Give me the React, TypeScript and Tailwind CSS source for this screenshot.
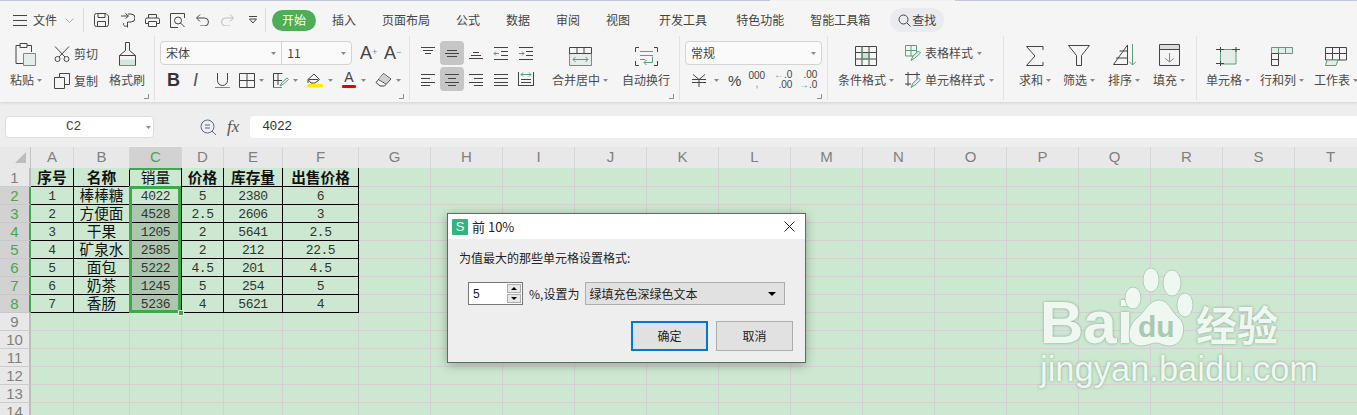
import type { ReactNode } from 'react';

const CJK = 'font-["Noto_Sans_CJK_SC","Liberation_Sans",sans-serif]';
const GREEN = '#5a9e78';
const INK = '#444';

const tabs = [
    { label: '插入', ml: 16 },
    { label: '页面布局', ml: 26 },
    { label: '公式', ml: 26 },
    { label: '数据', ml: 26 },
    { label: '审阅', ml: 26 },
    { label: '视图', ml: 26 },
    { label: '开发工具', ml: 29 },
    { label: '特色功能', ml: 29 },
    { label: '智能工具箱', ml: 26 },
];

const columns = [
    { name: 'A', width: 43 },
    { name: 'B', width: 56 },
    { name: 'C', width: 52 },
    { name: 'D', width: 42 },
    { name: 'E', width: 59 },
    { name: 'F', width: 76 },
];
const emptyColumns = ['G', 'H', 'I', 'J', 'K', 'L', 'M', 'N', 'O', 'P', 'Q', 'R', 'S', 'T'];

const sheet = [
    ['序号', '名称', '销量', '价格', '库存量', '出售价格'],
    ['1', '棒棒糖', '4022', '5', '2380', '6'],
    ['2', '方便面', '4528', '2.5', '2606', '3'],
    ['3', '干果', '1205', '2', '5641', '2.5'],
    ['4', '矿泉水', '2585', '2', '212', '22.5'],
    ['5', '面包', '5222', '4.5', '201', '4.5'],
    ['6', '奶茶', '1245', '5', '254', '5'],
    ['7', '香肠', '5236', '4', '5621', '4'],
];

function Ico({ w, h, children, className = '' }: { w: number; h: number; children: ReactNode; className?: string }) {
    return (
        <svg width={w} height={h} viewBox={`0 0 ${w} ${h}`} fill="none" stroke={INK} strokeWidth={1} className={`block shrink-0 ${className}`}>
            {children}
        </svg>
    );
}

function Caret({ className = '' }: { className?: string }) {
    return (
        <svg width={5} height={3} viewBox="0 0 5 3" className={`block shrink-0 ${className}`}>
            <path d="M0 0h5L2.5 3z" fill="#8c8c8c" />
        </svg>
    );
}

function Launcher({ right }: { right: number }) {
    return (
        <svg width={5} height={5} viewBox="0 0 5 5" className="absolute top-[58px]" style={{ right }}>
            <path d="M4.5 0V4.5H0" fill="none" stroke="#8c8c8c" />
        </svg>
    );
}

// horizontal rules used by the alignment buttons: [x1, x2, y]
function Lines({ rows, children }: { rows: number[][]; children?: ReactNode }) {
    return (
        <Ico w={16} h={16}>
            {rows.map(([a, b, y], i) => (
                <path key={i} d={`M${a} ${y + 0.5}H${b}`} />
            ))}
            {children}
        </Ico>
    );
}

function BigButton({ icon, label, width, ml, caret = true }: { icon: ReactNode; label: string; width: number; ml: number; caret?: boolean }) {
    return (
        <div className="flex flex-col items-center" style={{ width, marginLeft: ml }}>
            <div className="flex h-[30px] items-end">{icon}</div>
            <div className="flex h-[28px] items-center gap-[3px] whitespace-nowrap text-[12px] text-[#4a4a4a]">
                {label}
                {caret && <Caret />}
            </div>
        </div>
    );
}

function Group({ width, children }: { width: number; children: ReactNode }) {
    return (
        <div className="relative h-[64px] shrink-0 border-r border-[#e2e2e2]" style={{ width }}>
            {children}
        </div>
    );
}

function Combo({ text, width }: { text: string; width: number }) {
    return (
        <div className="flex h-full items-center px-[5px] text-[12px] text-[#444]" style={{ width }}>
            <span className="flex-1">{text}</span>
            <Caret />
        </div>
    );
}

function QuickBar() {
    return (
        <div className="flex h-[35px] items-center pt-[3px]">
            <Ico w={14} h={11} className="ml-[13px]">
                <path d="M0 .5H14M0 5.5H14M0 10.5H14" />
            </Ico>
            <span className="ml-[6px] text-[12px] text-[#444]">文件</span>
            <Ico w={9} h={5} className="ml-[8px]">
                <path d="M.5.5L4.5 4.5L8.5.5" stroke="#aaa" />
            </Ico>
            <div className="ml-[9px] h-[24px] w-px bg-[#dcdcdc]" />
            <Ico w={15} h={14} className="ml-[10px]">
                <path d="M2.5.5H12L14.5 3V11.5a2 2 0 0 1-2 2H2.5a2 2 0 0 1-2-2V2.5a2 2 0 0 1 2-2zM3.5 13.5V8.5H11.5V13.5M4 .5V4.5H11V.5" />
            </Ico>
            <Ico w={15} h={15} className="ml-[11px]">
                <path d="M5.5 .5L8.5 3L5.5 5.5M8 3H1M8 1H11a3.5 3.5 0 0 1 0 8H7.5V14.5M7.5 11.5a2 2 0 1 1-3.5-1.5" />
            </Ico>
            <Ico w={15} h={13} className="ml-[10px]">
                <path d="M3.5 4V.5H11.5V4M3 9.5H.5V5.5a1.5 1.5 0 0 1 1.5-1.5H13a1.5 1.5 0 0 1 1.5 1.5V9.5H12M3.5 7.5H11.5V12.5H3.5z" />
            </Ico>
            <Ico w={16} h={15} className="ml-[10px]">
                <path d="M14.5 5V.5H.5V14.5H8" />
                <circle cx="8" cy="7.5" r="3.5" />
                <path d="M10.5 10L14.5 14" />
            </Ico>
            <Ico w={13} h={12} className="ml-[10px]">
                <path d="M4 .5L.5 4L4 7.5M1 4H8.5a4 4 0 0 1 0 8H4" />
            </Ico>
            <Ico w={13} h={12} className="ml-[12px]">
                <path d="M9 .5L12.5 4L9 7.5M12 4H4.5a4 4 0 0 0 0 8H9" stroke="#bbb" />
            </Ico>
            <Ico w={8} h={8} className="ml-[15px]">
                <path d="M0 .5H8" />
                <path d="M.5 3L4 7L7.5 3z" />
            </Ico>
            <div className="ml-[8px] h-[24px] w-px bg-[#dcdcdc]" />
            <div className="ml-[6px] flex h-[21px] w-[44px] items-center justify-center rounded-full bg-[#4fad57] text-[12px] text-white">开始</div>
            {tabs.map((t) => (
                <span key={t.label} className="whitespace-nowrap text-[12px] text-[#444]" style={{ marginLeft: t.ml }}>
                    {t.label}
                </span>
            ))}
            <div className="ml-[20px] flex h-[24px] w-[54px] items-center justify-center gap-[1px] rounded-full bg-[#e9ebee] text-[12px] text-[#444]">
                <Ico w={13} h={13}>
                    <circle cx="5.5" cy="5.5" r="4.5" />
                    <path d="M9 9L12.5 12.5" />
                </Ico>
                查找
            </div>
        </div>
    );
}

function ClipboardGroup() {
    return (
        <Group width={155}>
            <div className="flex">
                <BigButton
                    label="粘贴"
                    width={34}
                    ml={9}
                    icon={
                        <Ico w={22} h={23}>
                            <path d="M5.5 2.5H1V20.5H8M5 .5H12V4.5H5zM12 2.5H16.5V9" />
                            <path d="M8.5 10.5H20.5V22.5H8.5z" fill="#e4ede8" stroke={GREEN} />
                        </Ico>
                    }
                />
                <div className="ml-[11px] flex w-[52px] flex-col">
                    <div className="mt-[6px] flex h-[24px] items-center gap-[4px] text-[12px] text-[#4a4a4a]">
                        <Ico w={16} h={16}>
                            <path d="M1 .5L11 11M15 .5L5 11" />
                            <circle cx="3.5" cy="13" r="2.5" />
                            <circle cx="12.5" cy="13" r="2.5" />
                        </Ico>
                        剪切
                    </div>
                    <div className="mt-[3px] flex h-[24px] items-center gap-[4px] text-[12px] text-[#4a4a4a]">
                        <Ico w={16} h={16}>
                            <path d="M5.5 4.5V.5H15.5V11.5H11M.5 4.5H10.5V15.5H.5z" />
                        </Ico>
                        复制
                    </div>
                </div>
                <BigButton
                    label="格式刷"
                    width={38}
                    ml={2}
                    caret={false}
                    icon={
                        <Ico w={19} h={24}>
                            <path d="M7.5.5H11.5V8.5L17.5 13.5V23.5H1.5V13.5L7.5 8.5z" />
                            <path d="M2 17.5H17V23H2z" fill="#d5e6dc" stroke="none" />
                            <path d="M1.5 13.5H17.5" />
                            <path d="M1.5 23.5H17.5" stroke={GREEN} />
                        </Ico>
                    }
                />
            </div>
            <Launcher right={5} />
        </Group>
    );
}

function FontGroup() {
    return (
        <Group width={255}>
            <div className="mt-[5px] flex h-[24px] items-center">
                <div className="ml-[5px] flex h-[24px] w-[192px] rounded-[4px] border border-[#d4d4d4] bg-[#fafafa]">
                    <Combo text="宋体" width={121} />
                    <div className="h-full w-px bg-[#d4d4d4]" />
                    <Combo text="11" width={69} />
                </div>
                <span className="ml-[8px] w-[24px] font-['Liberation_Sans'] text-[18px] font-light leading-none text-[#444]">
                    A<sup className="text-[9px] text-[#5a9e78]">+</sup>
                </span>
                <span className="w-[20px] font-['Liberation_Sans'] text-[18px] font-light leading-none text-[#444]">
                    A<sup className="text-[9px] text-[#5a9e78]">−</sup>
                </span>
            </div>
            <div className="mt-[3px] flex h-[24px] items-center">
                <span className="ml-[12px] w-[12px] font-['Liberation_Sans'] text-[18px] font-bold leading-none text-[#333]">B</span>
                <span className="ml-[14px] w-[10px] font-['Liberation_Sans'] text-[18px] italic leading-none text-[#555]">I</span>
                <Ico w={15} h={15} className="ml-[12px]">
                    <path d="M2.5 0V7.5a5 5 0 0 0 10 0V0" />
                    <path d="M0 14.5H15" stroke={GREEN} />
                </Ico>
                <Ico w={16} h={15} className="ml-[9px]">
                    <path d="M.5.5H15.5V14.5H.5zM8 .5V14.5M.5 7.5H15.5" />
                </Ico>
                <Caret className="ml-[4px]" />
                <Ico w={16} h={15} className="ml-[9px]">
                    <path d="M9.5.5H.5V14.5H6M.5 7.5H9M5 .5V12" />
                    <path d="M7 13L9 9.5L14 5L15.5 6.5L10.5 11zM.5 14.5H9" stroke={GREEN} />
                </Ico>
                <Caret className="ml-[4px]" />
                <Ico w={16} h={15} className="ml-[9px]">
                    <path d="M1 6.5L7 1L12.5 6.5L8 10H4zM1 6.5V10M2 6.5H11" />
                    <path d="M0 12.5a1.5 1.5 0 0 1 1.5-1.5H14.5a1.5 1.5 0 0 1 0 3.5H1.5A1.5 1.5 0 0 1 0 12.5z" fill="#ffeb00" stroke="none" />
                </Ico>
                <Caret className="ml-[5px]" />
                <div className="ml-[9px] flex w-[14px] flex-col items-center">
                    <span className="font-['Liberation_Sans'] text-[14px] leading-[11px] text-[#444]">A</span>
                    <div className="mt-[2px] h-[3px] w-[14px] rounded-[1px] bg-[#ee0000]" />
                </div>
                <Caret className="ml-[5px]" />
                <Ico w={17} h={14} className="ml-[9px]">
                    <path d="M8.5.5L16 6L9.5 13H5L1 9.5zM3.5 6.5L11 11" />
                    <path d="M8.5 1L15.5 6L11 10.5L4 6z" fill="#d0d0d0" stroke="none" />
                </Ico>
                <Caret className="ml-[4px]" />
            </div>
            <Launcher right={5} />
        </Group>
    );
}

function AlignCell({ active, children, ml }: { active?: boolean; children: ReactNode; ml: number }) {
    return (
        <div className={`flex h-[24px] w-[24px] items-center justify-center rounded-[4px] ${active ? 'bg-[#c6c6c6]' : ''}`} style={{ marginLeft: ml }}>
            {children}
        </div>
    );
}

function AlignGroup() {
    return (
        <Group width={270}>
            <div className="flex">
                <div className="flex w-[132px] flex-col">
                    <div className="mt-[5px] flex h-[24px]">
                        <AlignCell ml={6}><Lines rows={[[1, 15, 2], [3, 13, 5], [5, 11, 8]]} /></AlignCell>
                        <AlignCell ml={0} active><Lines rows={[[3, 13, 5], [1, 15, 8], [3, 13, 11]]} /></AlignCell>
                        <AlignCell ml={0}><Lines rows={[[5, 11, 7], [3, 13, 10], [1, 15, 13]]} /></AlignCell>
                        <AlignCell ml={1}>
                            <Lines rows={[[1, 15, 2], [8, 15, 6], [8, 15, 10], [1, 15, 14]]}>
                                <path d="M6 8.5H1M3 6.5L1 8.5L3 10.5" stroke={GREEN} />
                            </Lines>
                        </AlignCell>
                        <AlignCell ml={1}>
                            <Lines rows={[[1, 15, 2], [8, 15, 6], [8, 15, 10], [1, 15, 14]]}>
                                <path d="M1 8.5H6M4 6.5L6 8.5L4 10.5" stroke={GREEN} />
                            </Lines>
                        </AlignCell>
                    </div>
                    <div className="mt-[2px] flex h-[24px]">
                        <AlignCell ml={6}><Lines rows={[[1, 15, 3], [1, 10, 7], [1, 15, 11], [1, 10, 14]]} /></AlignCell>
                        <AlignCell ml={0} active><Lines rows={[[1, 15, 3], [4, 12, 7], [1, 15, 11], [4, 12, 14]]} /></AlignCell>
                        <AlignCell ml={0}><Lines rows={[[1, 15, 3], [6, 15, 7], [1, 15, 11], [6, 15, 14]]} /></AlignCell>
                        <AlignCell ml={1}><Lines rows={[[1, 15, 3], [1, 15, 7], [1, 15, 11], [1, 15, 14]]} /></AlignCell>
                        <AlignCell ml={1}>
                            <Lines rows={[[3, 13, 8], [3, 13, 11], [0, 16, 14]]}>
                                <path d="M.5 1V15M15.5 1V15" />
                                <path d="M3 3.5H13M5 1.5L3 3.5L5 5.5M11 1.5L13 3.5L11 5.5" stroke={GREEN} />
                            </Lines>
                        </AlignCell>
                    </div>
                </div>
                <BigButton
                    label="合并居中"
                    width={60}
                    ml={8}
                    icon={
                        <Ico w={23} h={19}>
                            <path d="M.5 6.5H22.5V18.5H.5z" fill="#e4ede8" stroke={GREEN} />
                            <path d="M.5.5H22.5V6.5H.5zM8 .5V6.5M15 .5V6.5" />
                            <path d="M4 12.5H19M6.5 10L4 12.5L6.5 15M16.5 10L19 12.5L16.5 15" stroke={GREEN} />
                        </Ico>
                    }
                />
                <BigButton
                    label="自动换行"
                    width={48}
                    ml={12}
                    caret={false}
                    icon={
                        <Ico w={23} h={19}>
                            <path d="M.5 5V.5H4M19 .5H22.5V5M.5 14V18.5H4M19 18.5H22.5V14" />
                            <path d="M5 4.5H18M5 8.5H18M5 12.5H10" stroke="#888" />
                            <path d="M17.5 9.5V15.5H9M11.5 13L9 15.5L11.5 18" stroke={GREEN} />
                        </Ico>
                    }
                />
            </div>
            <Launcher right={5} />
        </Group>
    );
}

function NumberGroup() {
    return (
        <Group width={148}>
            <div className="ml-[5px] mt-[5px] h-[24px] w-[137px] rounded-[4px] border border-[#d4d4d4] bg-[#fafafa]">
                <Combo text="常规" width={135} />
            </div>
            <div className="mt-[3px] flex h-[24px] items-center font-['Liberation_Sans'] text-[#444]">
                <Ico w={14} h={13} className="ml-[12px]">
                    <path d="M1 .5L7 5.5L13 .5M0 5.5H14M0 8.5H14M7 5.5V13" />
                </Ico>
                <Caret className="ml-[8px]" />
                <span className="ml-[9px] text-[15px] leading-none">%</span>
                <div className="ml-[8px] flex w-[15px] flex-col items-center text-[10px] leading-[8px]">
                    <span>000</span>
                    <span className="text-[#5a9e78]">,</span>
                </div>
                <div className="ml-[12px] flex w-[16px] flex-col items-end text-[10px] leading-[10px]">
                    <span><span className="text-[#5a9e78]">←</span>.0</span>
                    <span>.00</span>
                </div>
                <div className="ml-[9px] flex w-[16px] flex-col items-end text-[10px] leading-[10px]">
                    <span>.00</span>
                    <span><span className="text-[#5a9e78]">→</span>.0</span>
                </div>
            </div>
            <Launcher right={5} />
        </Group>
    );
}

function StyleGroup() {
    return (
        <Group width={176}>
            <div className="flex">
                <BigButton
                    label="条件格式"
                    width={60}
                    ml={8}
                    icon={
                        <Ico w={22} h={20}>
                            <path d="M7 6.5H14V13H7z" fill="#cfe3d6" stroke="none" />
                            <path d="M.5.5H21.5V19.5H.5zM.5 6.5H21.5M.5 13H21.5M7 .5V19.5M14 .5V19.5" />
                            <path d="M7 .5V13H14V6.5" stroke={GREEN} />
                        </Ico>
                    }
                />
                <div className="ml-[9px] flex flex-col">
                    <div className="mt-[5px] flex h-[24px] items-center whitespace-nowrap text-[12px] text-[#4a4a4a]">
                        <Ico w={16} h={16}>
                            <path d="M.5.5H11.5V11H.5zM.5 5.5H11.5M6 .5V11" stroke={GREEN} />
                            <path d="M6 15.5L8 11L13.5 6L15.5 8L10 13z" stroke={GREEN} fill="#e4ede8" />
                        </Ico>
                        <span className="ml-[4px]">表格样式</span>
                        <Caret className="ml-[4px]" />
                    </div>
                    <div className="mt-[3px] flex h-[24px] items-center whitespace-nowrap text-[12px] text-[#4a4a4a]">
                        <Ico w={16} h={16}>
                            <path d="M3 0V14M12 0V9M0 2.5H15M0 12H6" />
                            <path d="M6 15.5L8 11L13.5 6L15.5 8L10 13z" stroke={GREEN} fill="#e4ede8" />
                        </Ico>
                        <span className="ml-[4px]">单元格样式</span>
                        <Caret className="ml-[4px]" />
                    </div>
                </div>
            </div>
        </Group>
    );
}

function EditGroup() {
    return (
        <Group width={193}>
            <div className="flex">
                <BigButton
                    label="求和"
                    width={30}
                    ml={16}
                    icon={
                        <Ico w={18} h={20}>
                            <path d="M17 4V.5H.5L9 10L.5 19.5H17V16" />
                        </Ico>
                    }
                />
                <BigButton
                    label="筛选"
                    width={30}
                    ml={14}
                    icon={
                        <Ico w={22} h={21}>
                            <path d="M.5.5H21.5L13.5 10.5V20.5H8.5V10.5z" />
                        </Ico>
                    }
                />
                <BigButton
                    label="排序"
                    width={30}
                    ml={15}
                    icon={
                        <Ico w={23} h={22}>
                            <path d="M14.5 1V20.5H.5zM14.5 7H6.5M14.5 14H3" />
                            <path d="M19.5 0V21M16 17.5L19.5 21L23 17.5" stroke={GREEN} />
                        </Ico>
                    }
                />
                <BigButton
                    label="填充"
                    width={30}
                    ml={15}
                    icon={
                        <Ico w={21} h={22}>
                            <path d="M.5 1H20.5V5.5H.5z" fill="#dcdcdc" stroke="none" />
                            <path d="M.5.5H20.5V21.5H.5zM.5 5.5H20.5" />
                            <path d="M10.5 9V18M6.5 14.5L10.5 18L14.5 14.5" stroke={GREEN} />
                        </Ico>
                    }
                />
            </div>
        </Group>
    );
}

function CellsGroup() {
    return (
        <div className="flex h-[64px] flex-1 overflow-hidden">
            <BigButton
                label="单元格"
                width={46}
                ml={9}
                icon={
                    <Ico w={24} h={19}>
                        <path d="M4.5 2.5H20V17H4.5z" fill="#e4ede8" stroke={GREEN} />
                        <path d="M4.5 0V5M0 2.5H8M20 0V5M16 2.5H24M4.5 14V19M0 16.5H8" />
                    </Ico>
                }
            />
            <BigButton
                label="行和列"
                width={46}
                ml={10}
                icon={
                    <Ico w={22} h={19}>
                        <path d="M.5.5H21.5V6.5H.5zM7.5.5V6.5M14.5.5V6.5" stroke={GREEN} fill="#e4ede8" />
                        <path d="M.5 6.5H7.5V18.5H.5zM.5 12.5H7.5" />
                    </Ico>
                }
            />
            <BigButton
                label="工作表"
                width={46}
                ml={10}
                icon={
                    <Ico w={22} h={19}>
                        <path d="M.5 13V.5H21.5V13M.5 6.5H21.5M7.5.5V13M14.5.5V13M.5 13H21.5" />
                        <path d="M2 13H13L11 18.5H.5z" stroke={GREEN} fill="#e4ede8" />
                    </Ico>
                }
            />
        </div>
    );
}

function FormulaBar() {
    return (
        <div className="flex h-[45px] items-center bg-[#eeeeee] pt-[5px]">
            <div className="ml-[5px] flex h-[22px] w-[149px] items-center rounded-[4px] border border-[#dddddd] bg-white pl-[60px] pr-[2px] font-['Liberation_Mono'] text-[13px] tracking-[-0.4px] text-[#444]">
                <span className="flex-1">C2</span>
                <Caret />
            </div>
            <Ico w={17} h={17} className="ml-[46px]">
                <circle cx="7.5" cy="7.5" r="6.5" stroke="#5b6b80" />
                <path d="M5 6H10M5 9H10M12 12L16 16" stroke="#5b6b80" />
            </Ico>
            <span className="ml-[10px] font-['Liberation_Serif'] text-[17px] italic text-[#555]">fx</span>
            <div className="ml-[11px] flex h-[22px] flex-1 items-center rounded-l-[4px] bg-white pl-[12px] font-['Liberation_Mono'] text-[13px] tracking-[-0.47px] text-[#333]">4022</div>
        </div>
    );
}

function HeaderRow() {
    return (
        <div className="flex h-[21px] bg-[#e8e8e8] font-['Liberation_Sans'] text-[15px] text-[#808080]">
            <div className="flex h-full w-[31px] shrink-0 items-center border-r border-[#c4c4c4] pl-[15px]">
                <div className="h-0 w-0 border-b-[11px] border-l-[11px] border-b-[#bdbdbd] border-l-transparent" />
            </div>
            {columns.map((c) => (
                <div
                    key={c.name}
                    className={`flex shrink-0 items-center justify-center border-r border-[#d6d6d6] ${c.name === 'C' ? 'bg-[#d2d2d2] text-[#4ca64c]' : ''}`}
                    style={{ width: c.width }}
                >
                    {c.name}
                </div>
            ))}
            {emptyColumns.map((c) => (
                <div key={c} className="flex w-[72px] shrink-0 items-center justify-center border-r border-[#d6d6d6]">
                    {c}
                </div>
            ))}
        </div>
    );
}

function RowLabel({ n, active }: { n: number; active: boolean }) {
    return (
        <div
            className={`flex h-full w-[31px] shrink-0 items-center justify-center border-b font-['Liberation_Sans'] text-[15px] leading-[17px] ${
                active ? 'border-r-2 border-b-[#c8c8c8] border-r-[#3ea84a] bg-[#d2d2d2] text-[#4ca64c]' : 'border-r-2 border-b-[#cccccc] border-r-[#bdbdbd] bg-[#e8e8e8] text-[#808080]'
            }`}
        >
            {n}
        </div>
    );
}

function Sheet() {
    const rows = Array.from({ length: 14 }, (_, i) => i);
    return (
        <div className="relative">
            {/* first row is one pixel taller so the black grid lands on the row lines */}
            {rows.map((r) => (
                <div key={r} className={`flex bg-[#cde8d0] ${r === 0 ? 'h-[19px]' : 'h-[18px]'}`}>
                    <RowLabel n={r + 1} active={r >= 1 && r <= 7} />
                    {columns.map((c, ci) => {
                        const value = sheet[r]?.[ci];
                        const filled = r < 8;
                        const marked = ci === 2 && r >= 2 && r <= 7;
                        const isNumber = value !== undefined && /^[\d.]+$/.test(value);
                        const isHeader = r === 0;
                        return (
                            <div
                                key={c.name}
                                className={`flex shrink-0 items-center justify-center whitespace-nowrap border-b border-r leading-[16px] ${
                                    filled ? 'border-black' : 'border-[#d4d0d4]'
                                } ${marked ? 'bg-[#adc6b0]' : ''} ${isNumber ? "pt-[2px] font-['Liberation_Mono'] text-[13px] tracking-[-0.47px] text-[#333]" : 'text-[14.67px] text-[#111]'} ${
                                    !isNumber && !isHeader ? 'pb-[1px]' : ''
                                } ${isHeader && ci !== 2 ? 'font-bold' : ''}`}
                                style={{ width: c.width }}
                            >
                                {value}
                            </div>
                        );
                    })}
                    {emptyColumns.map((c) => (
                        <div key={c} className="w-[72px] shrink-0 border-b border-r border-[#d4d0d4]" />
                    ))}
                </div>
            ))}
            {/* selection frame over C2:C8 */}
            <div className="pointer-events-none absolute left-[129px] top-[18px] h-[127px] w-[52px] border-[3px] border-[#3ea84a]" />
            <div className="pointer-events-none absolute left-[129px] top-0 h-[2px] w-[52px] bg-[#3ea84a]" />
            <div className="absolute left-[178px] top-[142px] h-[6px] w-[6px] border border-[#e8f4e8] bg-[#3ea84a]" />
        </div>
    );
}

function Watermark() {
    const glow = '[text-shadow:0_0_3px_rgba(70,110,80,0.55)]';
    return (
        <div className="pointer-events-none absolute left-[1036px] top-[268px] h-[125px] w-[255px] text-[#eef7f0]">
            <span className={`absolute left-[4px] top-[21px] font-['Liberation_Sans'] text-[60px] font-bold leading-[68px] ${glow}`}>Bai</span>
            <svg width="72" height="80" viewBox="0 0 72 80" className="absolute left-[87px] top-0">
                <g fill="#eef7f0" stroke="#9fbfa8" strokeWidth="0.7">
                    <ellipse cx="10" cy="30" rx="8" ry="11" />
                    <ellipse cx="28" cy="12" rx="8" ry="12" />
                    <ellipse cx="49" cy="15" rx="9" ry="13" />
                    <ellipse cx="62" cy="37" rx="8" ry="12" />
                    <path d="M36 32C46 32 48 44 56 50C64 56 62 78 46 78C40 78 38 75 33 75C28 75 24 78 18 78C4 78 2 60 14 50C22 44 26 32 36 32Z" />
                </g>
            </svg>
            <span className="absolute left-[102px] top-[42px] font-['Liberation_Sans'] text-[30px] font-bold leading-[34px] text-[#a9c9b2]">du</span>
            <span className={`absolute left-[160px] top-[29px] font-["Noto_Sans_CJK_SC",sans-serif] text-[41px] font-bold leading-[52px] ${glow}`}>经验</span>
            <span className={`absolute left-[4px] top-[81px] whitespace-nowrap font-['Liberation_Sans'] text-[34.5px] leading-[40px] ${glow}`}>jingyan.baidu.com</span>
        </div>
    );
}

function TopTenDialog() {
    return (
        <div className="absolute left-[447px] top-[213px] w-[359px] border border-[#5f6b62] bg-[#eeeeee] text-[12px] text-[#222] shadow-[0_2px_10px_rgba(0,0,0,0.3)]">
            <div className="flex h-[25px] items-center bg-white">
                <div className="ml-[4px] flex h-[16px] w-[16px] items-center justify-center rounded-[1px] bg-[#2fb67c] font-['Liberation_Sans'] text-[13px] leading-none text-white">S</div>
                <span className="ml-[4px] flex-1 text-[13px]">前 10%</span>
                <Ico w={11} h={11} className="mr-[10px]">
                    <path d="M.5.5L10.5 10.5M10.5.5L.5 10.5" stroke="#222" />
                </Ico>
            </div>
            <div className="px-[11px] pt-[10px]">
                <div className="h-[18px] leading-[18px]">为值最大的那些单元格设置格式:</div>
                <div className="mt-[15px] flex h-[23px] items-center">
                    <div className="ml-[9px] flex h-[23px] w-[55px] items-center justify-between border border-[#777] bg-white pl-[4px] pr-[1px] font-['Liberation_Sans']">
                        5
                        <div className="flex flex-col gap-px">
                            <div className="flex h-[9px] w-[14px] items-center justify-center border border-[#adadad] bg-[#e8e8e8]">
                                <div className="h-0 w-0 border-x-[3px] border-b-[3px] border-x-transparent border-b-black" />
                            </div>
                            <div className="flex h-[9px] w-[14px] items-center justify-center border border-[#adadad] bg-[#e8e8e8]">
                                <div className="h-0 w-0 border-x-[3px] border-t-[3px] border-x-transparent border-t-black" />
                            </div>
                        </div>
                    </div>
                    <span className="ml-[6px]">%,设置为</span>
                    <div className="ml-[6px] flex h-[23px] w-[200px] items-center border border-[#adadad] bg-[#e1e1e1] pl-[3px] pr-[8px]">
                        <span className="flex-1">绿填充色深绿色文本</span>
                        <div className="h-0 w-0 border-x-[4px] border-t-[4px] border-x-transparent border-t-black" />
                    </div>
                </div>
                <div className="mb-[11px] mt-[16px] flex h-[30px] justify-end gap-[8px] pr-[1px]">
                    <div className="flex w-[77px] items-center justify-center border-2 border-[#0078d7] bg-[#e1e1e1]">确定</div>
                    <div className="flex w-[77px] items-center justify-center border border-[#adadad] bg-[#e1e1e1]">取消</div>
                </div>
            </div>
        </div>
    );
}

export default function App() {
    return (
        <div className={`relative h-[415px] w-[1357px] overflow-hidden bg-[#eeeeee] ${CJK}`}>
            <div className="flex h-px">
                <div className="w-[770px] bg-[#c7cde0]" />
                <div className="w-[185px] bg-[#f5f5f5]" />
                <div className="flex-1 bg-[#c7cde0]" />
            </div>
            <div className="relative z-10 h-[101px] bg-[#f5f5f5] shadow-[0_1px_3px_rgba(0,0,0,0.12)]">
                <QuickBar />
                <div className="flex overflow-hidden">
                    <ClipboardGroup />
                    <FontGroup />
                    <AlignGroup />
                    <NumberGroup />
                    <StyleGroup />
                    <EditGroup />
                    <CellsGroup />
                </div>
            </div>
            <FormulaBar />
            <HeaderRow />
            <Sheet />
            <Watermark />
            <TopTenDialog />
        </div>
    );
}
